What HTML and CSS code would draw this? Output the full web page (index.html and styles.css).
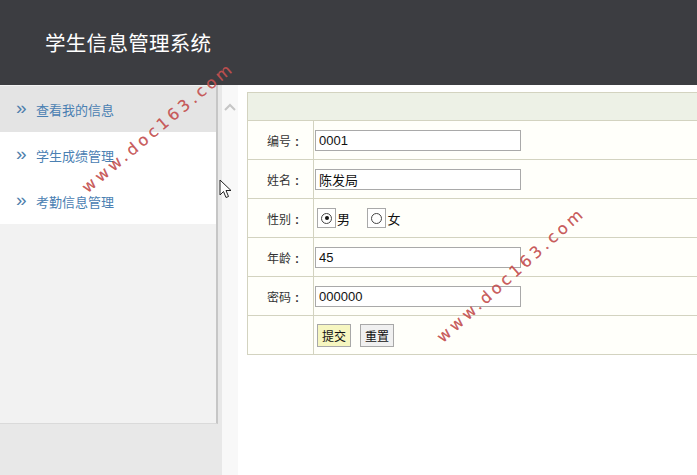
FILE: index.html
```html
<!DOCTYPE html>
<html lang="zh">
<head>
<meta charset="utf-8">
<title>学生信息管理系统</title>
<link rel="stylesheet" href="styles.css">
</head>
<body>
<div class="header"><h1 class="title">学生信息管理系统</h1></div>
<div class="main">
  <div class="sidebar">
    <div class="panel">
      <ul class="menu">
        <li class="item active"><span class="arrow">»</span>查看我的信息</li>
        <li class="item"><span class="arrow">»</span>学生成绩管理</li>
        <li class="item"><span class="arrow">»</span>考勤信息管理</li>
      </ul>
    </div>
  </div>
  <div class="strip">
    <svg class="chev" width="12" height="8" viewBox="0 0 12 8"><path d="M1 7 L6 2 L11 7" fill="none" stroke="#c6c6c6" stroke-width="2"/></svg>
  </div>
  <div class="content">
    <table class="form">
      <tr class="head"><td colspan="2"></td></tr>
      <tr><td class="label">编号<span class="colon">:</span></td><td class="field"><input class="inp" type="text" value="0001"></td></tr>
      <tr><td class="label">姓名<span class="colon">:</span></td><td class="field"><input class="inp" type="text" value="陈发局"></td></tr>
      <tr><td class="label">性别<span class="colon">:</span></td><td class="field">
        <span class="radio"><span class="rbox"><span class="rdot on"></span></span>男</span>
        <span class="radio"><span class="rbox"><span class="rdot"></span></span>女</span>
      </td></tr>
      <tr><td class="label">年龄<span class="colon">:</span></td><td class="field"><input class="inp" type="text" value="45"></td></tr>
      <tr><td class="label">密码<span class="colon">:</span></td><td class="field"><input class="inp" type="text" value="000000"></td></tr>
      <tr><td class="label"></td><td class="field"><button class="btn submit">提交</button><button class="btn reset">重置</button></td></tr>
    </table>
  </div>
</div>
<div class="wm wm1">www.doc163.com</div>
<div class="wm wm2">www.doc163.com</div>
<svg class="cursor" width="14" height="20" viewBox="0 0 14 20"><path d="M1 1 L1 16 L4.5 12.5 L7 18.5 L9.5 17.5 L7 11.5 L12 11.5 Z" fill="#fff" stroke="#222" stroke-width="1"/></svg>
</body>
</html>
```
FILE: styles.css
```css
* { box-sizing: border-box; }
html, body { margin: 0; padding: 0; }
body {
  width: 697px; height: 475px; overflow: hidden; position: relative;
  background: #fff;
  font-family: "Liberation Sans", "Noto Sans CJK SC", sans-serif;
  color: #333;
}
.header {
  height: 85px; background: #3c3d41;
  display: flex; align-items: center; padding-left: 45px;
}
.title {
  margin: 0; font-weight: normal; color: #fff;
  font-size: 20.5px; font-family: "Noto Sans CJK SC", sans-serif;
  letter-spacing: 0.3px; padding-bottom: 2px;
}
.main { display: flex; height: 390px; }
.sidebar { width: 222px; background: #e8e8e8; flex: none; }
.panel {
  width: 218px; height: 339px; background: #f2f2f2;
  border-right: 2px solid #c6c6c6; border-bottom: 1px solid #dadada;
  padding-top: 1px;
}
.menu { list-style: none; margin: 0; padding: 0; }
.item {
  height: 46px; display: flex; align-items: center; background: #fff;
  color: #4a80b2; font-size: 13px; font-family: "Noto Sans CJK SC", sans-serif;
  padding-left: 16px;
}
.item.active { background: #e4e4e4; }
.arrow {
  width: 20px; font-size: 19px; line-height: 1; color: #4f7fac;
  font-family: "Liberation Sans", sans-serif; position: relative; top: -2px;
}
.strip { width: 16px; background: #f8f8f8; flex: none; display: flex; justify-content: center; padding-top: 18px; }
.chev { display: block; }
.content { flex: 1; padding: 7px 0 0 9px; overflow: hidden; }
.form { border-collapse: collapse; width: 560px; background: #fffffa; }
.form td { border: 1px solid #d3d3c0; padding: 0; }
.head td { height: 28px; background: #edf1e6; }
.form tr + tr td { height: 39px; }
.label {
  width: 66px; text-align: right; padding-right: 10px !important;
  font-size: 12px; font-family: "Noto Sans CJK SC", sans-serif; color: #333;
}
.colon { display: inline-block; width: 12px; text-align: center; font-weight: bold; font-family: "Liberation Sans", sans-serif; }
.field { padding-left: 1px !important; }
.inp {
  width: 206px; height: 21px; border: 1px solid #a9a9a9; margin-left: 0;
  padding: 0 0 0 3px; font-size: 13px; color: #111; background: #fff;
  font-family: "Liberation Sans", "Noto Sans CJK SC", sans-serif;
  display: block;
}
.radio { display: inline-flex; align-items: center; font-size: 13px; font-family: "Noto Sans CJK SC", sans-serif; color: #111; margin-right: 11px; margin-left: 2px; }
.rbox {
  width: 19px; height: 20px; border: 1px solid #a9a9a9; display: inline-flex;
  align-items: center; justify-content: center; background: #fff; margin-right: 1px;
}
.rdot { width: 11px; height: 11px; border: 1px solid #444; border-radius: 50%; position: relative; background: #fff; }
.rdot.on::after { content: ""; position: absolute; left: 2.5px; top: 2.5px; width: 4px; height: 4px; border-radius: 50%; background: #111; }
.btn {
  height: 23px; padding: 0 4px; border: 1px solid #a8a8a8; margin: 0 9px 0 2px;
  font-size: 12px; font-family: "Noto Sans CJK SC", sans-serif; color: #111;
  vertical-align: middle;
}
.submit { background: #f6f6c0; }
.reset { background: #f0f0f0; margin-left: 0; }
.wm {
  position: absolute; color: rgba(196, 80, 80, 0.85); font-size: 16px;
  font-family: "DejaVu Sans", sans-serif; letter-spacing: 3.7px;
  transform-origin: left center; white-space: nowrap;
  text-shadow: 0.4px 0 0 rgba(196, 80, 80, 0.6);
}
.wm1 { left: 84px; top: 180px; transform: rotate(-40deg); }
.wm2 { left: 439px; top: 330px; transform: rotate(-42deg); }
.cursor { position: absolute; left: 219px; top: 179px; }
```
